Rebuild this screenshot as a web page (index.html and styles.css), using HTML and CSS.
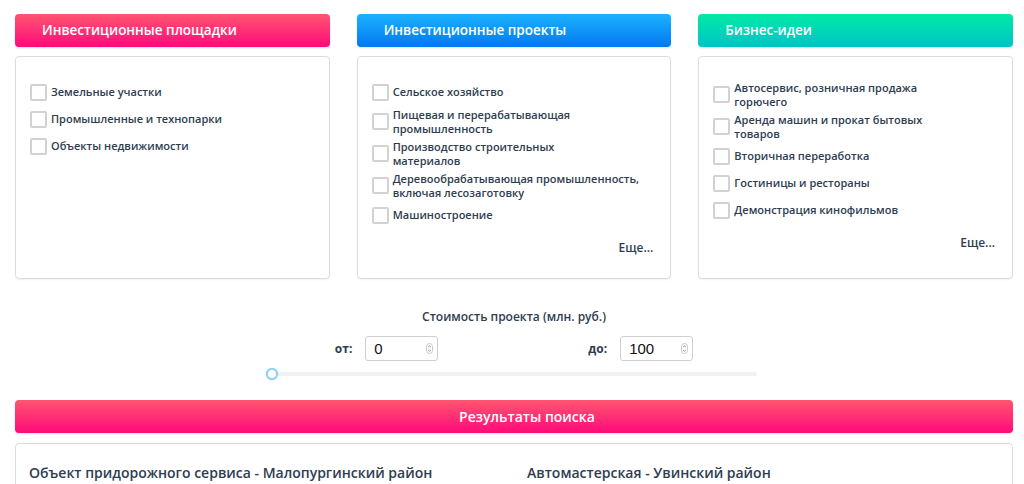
FILE: index.html
```html
<!DOCTYPE html>
<html>
<head>
    <meta charset="UTF-8">
    <title>Поиск инвестиционных предложений</title>
    <link rel="stylesheet" href="styles.css">
</head>
<body>
    <div class="page">
        <!-- Filter columns -->
        <div class="filters">
            <div class="filter-col">
                <div class="filter-head head-pink">Инвестиционные площадки</div>
                <div class="filter-box">
                    <ul class="check-list">
                        <li><span class="check"></span><span class="check-label">Земельные участки</span></li>
                        <li><span class="check"></span><span class="check-label">Промышленные и технопарки</span></li>
                        <li><span class="check"></span><span class="check-label">Объекты недвижимости</span></li>
                    </ul>
                </div>
            </div>

            <div class="filter-col">
                <div class="filter-head head-blue">Инвестиционные проекты</div>
                <div class="filter-box">
                    <ul class="check-list">
                        <li><span class="check"></span><span class="check-label">Сельское хозяйство</span></li>
                        <li><span class="check"></span><span class="check-label">Пищевая и перерабатывающая<br>промышленность</span></li>
                        <li><span class="check"></span><span class="check-label">Производство строительных<br>материалов</span></li>
                        <li><span class="check"></span><span class="check-label">Деревообрабатывающая промышленность,<br>включая лесозаготовку</span></li>
                        <li><span class="check"></span><span class="check-label">Машиностроение</span></li>
                    </ul>
                    <div class="more">Еще...</div>
                </div>
            </div>

            <div class="filter-col">
                <div class="filter-head head-green">Бизнес-идеи</div>
                <div class="filter-box">
                    <ul class="check-list">
                        <li><span class="check"></span><span class="check-label">Автосервис, розничная продажа<br>горючего</span></li>
                        <li><span class="check"></span><span class="check-label">Аренда машин и прокат бытовых<br>товаров</span></li>
                        <li><span class="check"></span><span class="check-label">Вторичная переработка</span></li>
                        <li><span class="check"></span><span class="check-label">Гостиницы и рестораны</span></li>
                        <li><span class="check"></span><span class="check-label">Демонстрация кинофильмов</span></li>
                    </ul>
                    <div class="more">Еще...</div>
                </div>
            </div>
        </div>

        <!-- Price range -->
        <div class="price">
            <div class="price-title">Стоимость проекта (млн. руб.)</div>
            <div class="price-inputs">
                <div class="price-group">
                    <label>от:</label>
                    <div class="num-field">
                        <input type="text" value="0">
                        <svg class="spin" width="7" height="11" viewBox="0 0 7 11">
                            <rect x="0.5" y="0.5" width="6" height="10" rx="3" fill="none" stroke="#c8c8c8"/>
                            <path d="M2 4.2 L3.5 2.8 L5 4.2 M2 6.8 L3.5 8.2 L5 6.8" fill="none" stroke="#777" stroke-width="0.8"/>
                        </svg>
                    </div>
                </div>
                <div class="price-group">
                    <label>до:</label>
                    <div class="num-field">
                        <input type="text" value="100">
                        <svg class="spin" width="7" height="11" viewBox="0 0 7 11">
                            <rect x="0.5" y="0.5" width="6" height="10" rx="3" fill="none" stroke="#c8c8c8"/>
                            <path d="M2 4.2 L3.5 2.8 L5 4.2 M2 6.8 L3.5 8.2 L5 6.8" fill="none" stroke="#777" stroke-width="0.8"/>
                        </svg>
                    </div>
                </div>
            </div>
            <div class="slider">
                <span class="slider-thumb"></span>
            </div>
        </div>

        <!-- Results -->
        <div class="results-head">Результаты поиска</div>
        <div class="results-box">
            <div class="result-item">Объект придорожного сервиса - Малопургинский район</div>
            <div class="result-item">Автомастерская - Увинский район</div>
        </div>
    </div>
</body>
</html>
```

FILE: styles.css
```css
:root {
    --text-color: #2e3d50;
    --border-color: #dcdcdc;
    --check-border: #d2d2d2;
    --pink-top: #ff5670;
    --pink-bottom: #ff0a7a;
    --blue-top: #1cb2ff;
    --blue-bottom: #0079f0;
    --green-top: #00eaa6;
    --green-bottom: #00c3c6;
}
body {
    margin: 0;
    padding: 0;
    background: #ffffff;
    color: var(--text-color);
    font-family: "Open Sans", "Noto Sans", sans-serif;
    font-size: 12px;
    overflow: hidden;
}
.page {
    padding: 14px 11px 0 15px;
}

/* --- Filter columns --- */
.filters {
    display: grid;
    grid-template-columns: repeat(3, 1fr);
    gap: 27px;
}
.filter-head {
    height: 33px;
    line-height: 33px;
    padding: 0 27px;
    border-radius: 4px;
    color: #ffffff;
    font-size: 13.5px;
    font-weight: 600;
    box-shadow: 0 1px 2px rgba(0,0,0,0.12);
}
.head-pink { background: linear-gradient(to bottom, var(--pink-top), var(--pink-bottom)); }
.head-blue { background: linear-gradient(to bottom, var(--blue-top), var(--blue-bottom)); }
.head-green { background: linear-gradient(to bottom, var(--green-top), var(--green-bottom)); }

.filter-box {
    margin-top: 9px;
    height: 223px;
    box-sizing: border-box;
    border: 1px solid var(--border-color);
    border-radius: 4px;
    padding: 24px 17px 0 14px;
    box-shadow: 0 1px 2px rgba(0,0,0,0.06);
}
.check-list {
    list-style: none;
    margin: 0;
    padding: 0;
    display: flex;
    flex-direction: column;
    gap: 5px;
}
.check-list li {
    display: flex;
    align-items: center;
    min-height: 22px;
    gap: 4px;
}
.check {
    width: 13px;
    height: 13px;
    flex-shrink: 0;
    border: 2px solid var(--check-border);
    border-radius: 2px;
    background: #fff;
}
.check-label {
    font-size: 11px;
    font-weight: 600;
    line-height: 13.5px;
}
.more {
    text-align: right;
    margin-top: 13px;
    font-size: 12px;
    font-weight: 600;
}

/* --- Price range --- */
.price {
    margin-top: 29px;
    display: flex;
    flex-direction: column;
    align-items: center;
}
.price-title {
    font-size: 12px;
    font-weight: 600;
    line-height: 18px;
}
.price-inputs {
    margin-top: 10px;
    display: flex;
    gap: 150px;
}
.price-group {
    display: flex;
    align-items: center;
    gap: 13px;
}
.price-group label {
    font-size: 12px;
    font-weight: 700;
}
.num-field {
    width: 73px;
    height: 25px;
    box-sizing: border-box;
    border: 1px solid #cfcfcf;
    border-radius: 3px;
    display: flex;
    align-items: center;
    padding: 0 4px 0 8px;
}
.num-field input {
    flex-grow: 1;
    width: 0;
    border: none;
    outline: none;
    padding: 0;
    font-family: "Liberation Sans", Arial, sans-serif;
    font-size: 15px;
    color: #111;
    background: transparent;
}
.slider {
    margin-top: 11px;
    width: 491px;
    height: 4px;
    background: #f1f1f1;
    border-radius: 2px;
    display: flex;
    align-items: center;
    margin-left: -6px;
}
.slider-thumb {
    width: 8px;
    height: 8px;
    border: 2px solid #8fd0fb;
    border-radius: 50%;
    background: #fff;
    box-shadow: 0 0 1px rgba(80,170,240,0.6);
}

/* --- Results --- */
.results-head {
    margin-top: 24px;
    height: 33px;
    line-height: 33px;
    text-align: center;
    padding-left: 26px;
    border-radius: 4px;
    color: #fff;
    font-size: 14px;
    font-weight: 600;
    background: linear-gradient(to bottom, var(--pink-top), var(--pink-bottom));
    box-shadow: 0 1px 2px rgba(0,0,0,0.12);
}
.results-box {
    margin-top: 10px;
    height: 80px;
    border: 1px solid var(--border-color);
    border-radius: 4px;
    padding: 19px 13px 0;
    display: grid;
    grid-template-columns: 498px 1fr;
}
.result-item {
    font-size: 14px;
    font-weight: 600;
    line-height: 20px;
}
```
